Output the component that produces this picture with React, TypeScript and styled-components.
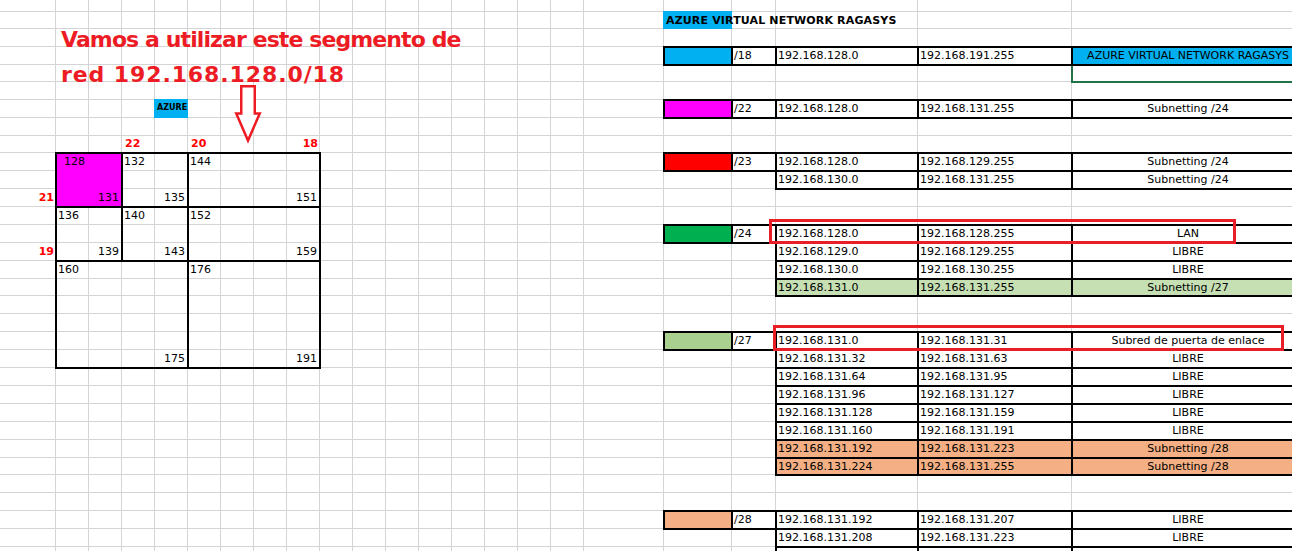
import React from 'react';
import styled, { createGlobalStyle, css } from 'styled-components';

const COLS = [56, ...Array(16).fill(33), 80, 68, 44, 142, 154, 234];
const ROWS = [12, 17, 18, 18, 17, 18, 18, 18, 17, 18, 18, 18, 18, 18, 18, 18, 17, 18, 18, 18, 18, 18, 18, 18, 18, 18, 17, 18, 18, 18, 18, 18];
const colTemplate = COLS.map((w) => `${w}px`).join(' ');
const rowTemplate = ROWS.map((h) => `${h}px`).join(' ');

const GlobalStyle = createGlobalStyle`
  html, body { margin: 0; padding: 0; background: #ffffff; }
  body { width: 1292px; height: 551px; overflow: hidden; }
`;

type Place = { $r: number; $c: number; $rs?: number; $cs?: number };

const place = css<Place>`
  grid-row: ${(p) => `${p.$r} / span ${p.$rs ?? 1}`};
  grid-column: ${(p) => `${p.$c} / span ${p.$cs ?? 1}`};
`;

const Sheet = styled.div`
  position: relative;
  display: grid;
  width: max-content;
  font-family: 'DejaVu Sans', Verdana, sans-serif;
  font-size: 11px;
  color: #000;
`;

const Layer = styled.div`
  grid-area: 1 / 1;
  display: grid;
  grid-template-columns: ${colTemplate};
  grid-template-rows: ${rowTemplate};
`;

const GridCell = styled.div`
  box-sizing: border-box;
  border-right: 1px solid #d4d4d4;
  border-bottom: 1px solid #d4d4d4;
`;

const BorderedCell = styled.div<Place & { $bg?: string; $align?: 'left' | 'center' }>`
  ${place};
  margin: -1px;
  border: 2px solid #000;
  background: ${(p) => p.$bg ?? 'transparent'};
  display: flex;
  align-items: center;
  justify-content: ${(p) => (p.$align === 'center' ? 'center' : 'flex-start')};
  padding: 0 3px 0 1px;
  line-height: 16px;
  white-space: nowrap;
  overflow: hidden;
  min-width: 0;
`;

const HeaderCell = styled.div<Place>`
  ${place};
  margin: -1px 0 0 -1px;
  background: #00b0f0;
  font-weight: bold;
  letter-spacing: 0.15px;
  line-height: 16px;
  padding: 2px 0 0 3px;
  white-space: nowrap;
  overflow: visible;
`;

const TagCell = styled.div<Place>`
  ${place};
  margin: -1px 0 0 -1px;
  background: #00b0f0;
  font-weight: bold;
  font-size: 8px;
  line-height: 18px;
  padding-left: 3px;
  white-space: nowrap;
  overflow: visible;
`;

const SelectionCell = styled.div<Place>`
  ${place};
  margin: 0 0 -1px -1px;
  border: 2px solid #217346;
  border-top: none;
`;

const RedLabel = styled.div<Place & { $align: 'left' | 'right' }>`
  ${place};
  align-self: end;
  color: #ff0000;
  font-weight: bold;
  line-height: 16px;
  padding: 0 2px 1px 3px;
  text-align: ${(p) => p.$align};
`;

const Box = styled.div<Place & { $bg?: string }>`
  ${place};
  margin: -1px;
  border: 2px solid #000;
  background: ${(p) => p.$bg ?? 'transparent'};
  display: flex;
  flex-direction: column;
  justify-content: space-between;
  line-height: 16px;
`;

const BoxTop = styled.span<{ $indent: number }>`
  padding-left: ${(p) => p.$indent}px;
`;

const BoxBottom = styled.span`
  align-self: flex-end;
  padding-right: 2px;
`;

const Note = styled.div`
  position: absolute;
  left: 61px;
  top: 22px;
  color: #ed1c24;
  font-family: 'DejaVu Sans', sans-serif;
  font-weight: bold;
  font-size: 22px;
  line-height: 35px;
  white-space: nowrap;
  pointer-events: none;
`;

const NoteLine = styled.div<{ $spacing: number }>`
  letter-spacing: ${(p) => p.$spacing}px;
`;

const Highlight = styled.div<{ $x: number; $y: number; $w: number; $h: number }>`
  position: absolute;
  left: ${(p) => p.$x}px;
  top: ${(p) => p.$y}px;
  width: ${(p) => p.$w}px;
  height: ${(p) => p.$h}px;
  box-sizing: border-box;
  border: 3px solid #e81f27;
  pointer-events: none;
`;

const ArrowSvg = styled.svg`
  position: absolute;
  left: 232px;
  top: 82px;
  overflow: visible;
`;

type TableRow = {
  row: number;
  swatch?: string;
  prefix?: string;
  start: string;
  end: string;
  desc: string;
  bg?: string;
  descBg?: string;
};

const CYAN = '#00b0f0';
const ORANGE = '#f4b084';

const tableRows: TableRow[] = [
  { row: 4, swatch: CYAN, prefix: '/18', start: '192.168.128.0', end: '192.168.191.255', desc: 'AZURE VIRTUAL NETWORK RAGASYS', descBg: CYAN },
  { row: 7, swatch: '#ff00ff', prefix: '/22', start: '192.168.128.0', end: '192.168.131.255', desc: 'Subnetting /24' },
  { row: 10, swatch: '#ff0000', prefix: '/23', start: '192.168.128.0', end: '192.168.129.255', desc: 'Subnetting /24' },
  { row: 11, start: '192.168.130.0', end: '192.168.131.255', desc: 'Subnetting /24' },
  { row: 14, swatch: '#00b050', prefix: '/24', start: '192.168.128.0', end: '192.168.128.255', desc: 'LAN' },
  { row: 15, start: '192.168.129.0', end: '192.168.129.255', desc: 'LIBRE' },
  { row: 16, start: '192.168.130.0', end: '192.168.130.255', desc: 'LIBRE' },
  { row: 17, start: '192.168.131.0', end: '192.168.131.255', desc: 'Subnetting /27', bg: '#c6e0b4' },
  { row: 20, swatch: '#a9d08e', prefix: '/27', start: '192.168.131.0', end: '192.168.131.31', desc: 'Subred de puerta de enlace' },
  { row: 21, start: '192.168.131.32', end: '192.168.131.63', desc: 'LIBRE' },
  { row: 22, start: '192.168.131.64', end: '192.168.131.95', desc: 'LIBRE' },
  { row: 23, start: '192.168.131.96', end: '192.168.131.127', desc: 'LIBRE' },
  { row: 24, start: '192.168.131.128', end: '192.168.131.159', desc: 'LIBRE' },
  { row: 25, start: '192.168.131.160', end: '192.168.131.191', desc: 'LIBRE' },
  { row: 26, start: '192.168.131.192', end: '192.168.131.223', desc: 'Subnetting /28', bg: ORANGE },
  { row: 27, start: '192.168.131.224', end: '192.168.131.255', desc: 'Subnetting /28', bg: ORANGE },
  { row: 30, swatch: ORANGE, prefix: '/28', start: '192.168.131.192', end: '192.168.131.207', desc: 'LIBRE' },
  { row: 31, start: '192.168.131.208', end: '192.168.131.223', desc: 'LIBRE' },
  { row: 32, start: '', end: '', desc: '' },
];

type BoxDef = { r: number; rs: number; c: number; cs: number; top: string; bottom: string; bg?: string; indent?: number };

const boxes: BoxDef[] = [
  { r: 10, rs: 3, c: 2, cs: 2, top: '128', bottom: '131', bg: '#ff00ff', indent: 7 },
  { r: 10, rs: 3, c: 4, cs: 2, top: '132', bottom: '135' },
  { r: 10, rs: 3, c: 6, cs: 4, top: '144', bottom: '151' },
  { r: 13, rs: 3, c: 2, cs: 2, top: '136', bottom: '139' },
  { r: 13, rs: 3, c: 4, cs: 2, top: '140', bottom: '143' },
  { r: 13, rs: 3, c: 6, cs: 4, top: '152', bottom: '159' },
  { r: 16, rs: 6, c: 2, cs: 4, top: '160', bottom: '175' },
  { r: 16, rs: 6, c: 6, cs: 4, top: '176', bottom: '191' },
];

const labels: { r: number; c: number; text: string; align: 'left' | 'right' }[] = [
  { r: 9, c: 4, text: '22', align: 'left' },
  { r: 9, c: 6, text: '20', align: 'left' },
  { r: 9, c: 9, text: '18', align: 'right' },
  { r: 12, c: 1, text: '21', align: 'right' },
  { r: 15, c: 1, text: '19', align: 'right' },
];

const cellCount = COLS.length * ROWS.length;

export default function App() {
  return (
    <>
      <GlobalStyle />
      <Sheet>
        <Layer>
          {Array.from({ length: cellCount }, (_, i) => (
            <GridCell key={i} />
          ))}
        </Layer>
        <Layer>
          <HeaderCell $r={2} $c={19}>AZURE VIRTUAL NETWORK RAGASYS</HeaderCell>
          <TagCell $r={7} $c={5}>AZURE</TagCell>
          <SelectionCell $r={5} $c={23} />

          {labels.map((l) => (
            <RedLabel key={l.text} $r={l.r} $c={l.c} $align={l.align}>
              {l.text}
            </RedLabel>
          ))}

          {boxes.map((b) => (
            <Box key={b.top} $r={b.r} $rs={b.rs} $c={b.c} $cs={b.cs} $bg={b.bg}>
              <BoxTop $indent={b.indent ?? 1}>{b.top}</BoxTop>
              <BoxBottom>{b.bottom}</BoxBottom>
            </Box>
          ))}

          {tableRows.map((t) => (
            <React.Fragment key={t.row}>
              {t.swatch && <BorderedCell $r={t.row} $c={19} $bg={t.swatch} />}
              {t.prefix && (
                <BorderedCell $r={t.row} $c={20}>
                  {t.prefix}
                </BorderedCell>
              )}
              <BorderedCell $r={t.row} $c={21} $bg={t.bg}>
                {t.start}
              </BorderedCell>
              <BorderedCell $r={t.row} $c={22} $bg={t.bg}>
                {t.end}
              </BorderedCell>
              <BorderedCell $r={t.row} $c={23} $bg={t.descBg ?? t.bg} $align="center">
                {t.desc}
              </BorderedCell>
            </React.Fragment>
          ))}
        </Layer>

        <Note>
          <NoteLine $spacing={-0.9}>Vamos a utilizar este segmento de</NoteLine>
          <NoteLine $spacing={0.9}>red 192.168.128.0/18</NoteLine>
        </Note>

        <ArrowSvg width="32" height="64" viewBox="0 0 32 64">
          <polygon
            points="9.25,4.25 22.75,4.25 22.75,31.5 27.75,31.5 16,58.5 4.25,31.5 9.25,31.5"
            fill="#ffffff"
            stroke="#ed1c24"
            strokeWidth="2.5"
            strokeLinejoin="miter"
          />
        </ArrowSvg>

        <Highlight $x={769} $y={219} $w={467} $h={25} />
        <Highlight $x={773} $y={325} $w={511} $h={26} />
      </Sheet>
    </>
  );
}
